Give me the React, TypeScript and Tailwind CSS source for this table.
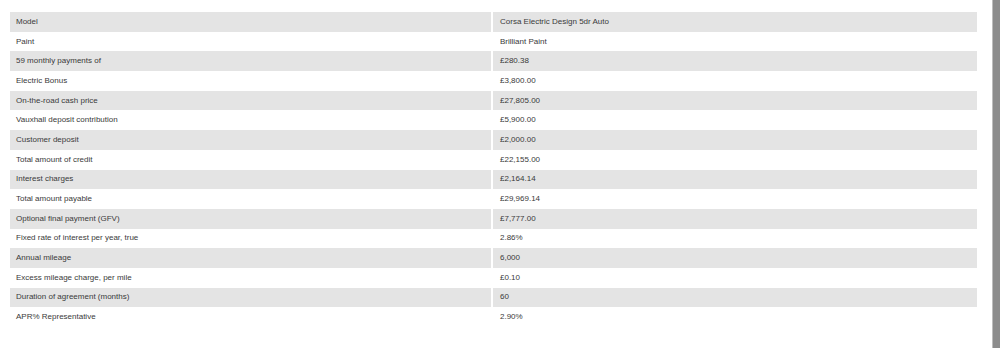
import React from "react";

const rows: [string, string][] = [
  ["Model", "Corsa Electric Design 5dr Auto"],
  ["Paint", "Brilliant Paint"],
  ["59 monthly payments of", "£280.38"],
  ["Electric Bonus", "£3,800.00"],
  ["On-the-road cash price", "£27,805.00"],
  ["Vauxhall deposit contribution", "£5,900.00"],
  ["Customer deposit", "£2,000.00"],
  ["Total amount of credit", "£22,155.00"],
  ["Interest charges", "£2,164.14"],
  ["Total amount payable", "£29,969.14"],
  ["Optional final payment (GFV)", "£7,777.00"],
  ["Fixed rate of interest per year, true", "2.86%"],
  ["Annual mileage", "6,000"],
  ["Excess mileage charge, per mile", "£0.10"],
  ["Duration of agreement (months)", "60"],
  ["APR% Representative", "2.90%"],
];

export default function App() {
  return (
    <div className="flex w-[1000px] h-[348px] bg-white overflow-hidden font-['Liberation_Sans',Arial,sans-serif] text-[8px] text-[#3a3a3a]">
      <div className="flex-1 pl-[10px] pt-[12px]">
        <div className="grid grid-cols-[481px_484px] gap-x-[2px]">
          {rows.map(([label, value], i) => {
            const bg = i % 2 === 0 ? "bg-[#e4e4e4]" : "bg-white";
            return (
              <React.Fragment key={label}>
                <div className={`h-[19.7px] flex items-center pl-[6px] ${bg}`}>{label}</div>
                <div className={`h-[19.7px] flex items-center pl-[7px] ${bg}`}>{value}</div>
              </React.Fragment>
            );
          })}
        </div>
      </div>
      <div className="w-[8px] h-full bg-[#8c8c8c] border-l border-[#bdbdbd]" />
    </div>
  );
}
